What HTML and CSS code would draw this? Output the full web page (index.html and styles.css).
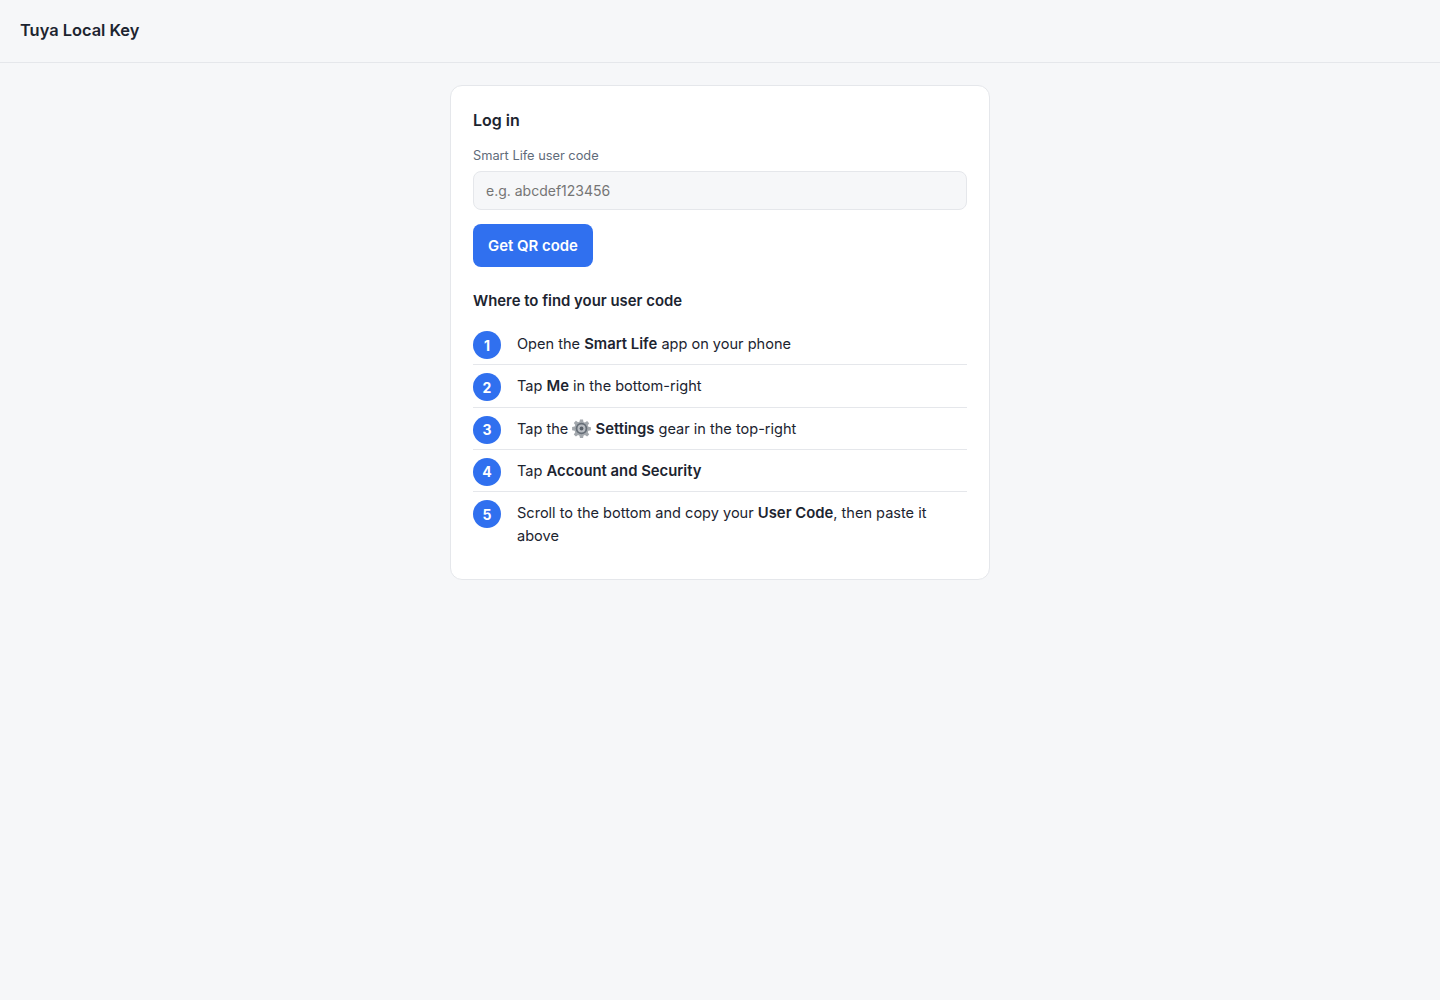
FILE: index.html
```html
<!DOCTYPE html>
<html lang="en">
<head>
<meta charset="utf-8">
<title>Tuya Local Key</title>
<link rel="stylesheet" href="styles.css">
</head>
<body>
<header class="topbar"><span class="brand">Tuya Local Key</span></header>
<main class="page">
  <section class="card">
    <h1 class="card-title">Log in</h1>
    <label class="field-label" for="code">Smart Life user code</label>
    <input class="field-input" id="code" type="text" placeholder="e.g. abcdef123456">
    <button class="primary-btn" type="button">Get QR code</button>
    <h2 class="sub-title">Where to find your user code</h2>
    <ol class="steps">
      <li class="step"><span class="num">1</span><span class="step-text">Open the <b>Smart Life</b> app on your phone</span></li>
      <li class="step"><span class="num">2</span><span class="step-text">Tap <b>Me</b> in the bottom-right</span></li>
      <li class="step"><span class="num">3</span><span class="step-text">Tap the <svg class="gear" viewBox="0 0 20 20" aria-hidden="true"><path fill="#a3a8ad" d="M8.4 0.4h3.200l.5 2.700 1.500.6 2.300-1.500 2.200 2.200-1.500 2.300.6 1.500 2.700.5v3.200l-2.700.5-.6 1.500 1.500 2.300-2.200 2.200-2.300-1.500-1.500.6-.5 2.700H8.400l-.5-2.700-1.500-.6-2.300 1.500-2.200-2.200 1.500-2.300-.6-1.500-2.700-.5V8.400l2.700-.5.6-1.500-1.500-2.300 2.200-2.200 2.300 1.500 1.500-.6z"/><circle cx="10" cy="10" r="6.100" fill="#666e77"/><circle cx="10" cy="10" r="4.200" fill="#b9bdc2"/><circle cx="10" cy="10" r="2" fill="#59616a"/></svg> <b>Settings</b> gear in the top-right</span></li>
      <li class="step"><span class="num">4</span><span class="step-text">Tap <b>Account and Security</b></span></li>
      <li class="step"><span class="num">5</span><span class="step-text">Scroll to the bottom and copy your <b>User Code</b>, then paste it above</span></li>
    </ol>
  </section>
</main>
</body>
</html>
```
FILE: styles.css
```css
* { box-sizing: border-box; }
html, body { margin: 0; padding: 0; }
body {
  min-height: 1000px;
  background: #f6f7f9;
  color: #1c2430;
  font-family: Inter, "Liberation Sans", sans-serif;
}
.topbar {
  height: 63px;
  display: flex;
  align-items: center;
  padding: 0 20px 3px;
  border-bottom: 1px solid #e5e7eb;
}
.brand { font-size: 16.4px; font-weight: 600; }
.page { display: flex; justify-content: center; padding-top: 22px; }
.card {
  width: 540px;
  height: 495px;
  padding: 24px 22px 0;
  background: #fff;
  border: 1px solid #e5e7eb;
  border-radius: 12px;
}
.card-title { margin: 0; font-size: 16px; font-weight: 600; line-height: 20px; }
.field-label {
  display: block;
  margin-top: 18px;
  color: #5f6b7a;
  font-size: 12.8px;
  line-height: 16px;
}
.field-input {
  display: block;
  width: 100%;
  height: 39px;
  margin-top: 7px;
  padding: 0 12px;
  background: #f6f7f9;
  border: 1px solid #e5e7eb;
  border-radius: 8px;
  font: 14px Inter, "Liberation Sans", sans-serif;
  color: #1c2430;
}
.field-input::placeholder { color: #757575; opacity: 1; }
.primary-btn {
  display: block;
  width: 120px;
  height: 43px;
  margin-top: 14px;
  padding: 0;
  background: #3070ef;
  border: 0;
  border-radius: 8px;
  color: #fff;
  font: 600 14.9px Inter, "Liberation Sans", sans-serif;
}
.sub-title { margin: 24px 0 0; font-size: 14.9px; font-weight: 600; line-height: 20px; }
.steps { list-style: none; margin: 20px 0 0; padding: 0; }
.step {
  display: flex;
  gap: 16px;
  padding-bottom: 5.4px;
  margin-bottom: 7.93px;
  border-bottom: 1px solid #e5e7eb;
}
.step:last-child { border-bottom: 0; }
.num {
  flex: none;
  width: 28px;
  height: 28px;
  display: flex;
  align-items: center;
  justify-content: center;
  border-radius: 50%;
  background: #3070ef;
  color: #fff;
  font-size: 14px;
  font-weight: 700;
}
.step-text { font-size: 14.55px; line-height: 23px; padding-top: 2px; margin-bottom: -2px; }
.step-text b { font-size: 14.85px; font-weight: 600; line-height: 1; }
.gear { width: 19px; height: 19px; vertical-align: -4px; }
```
